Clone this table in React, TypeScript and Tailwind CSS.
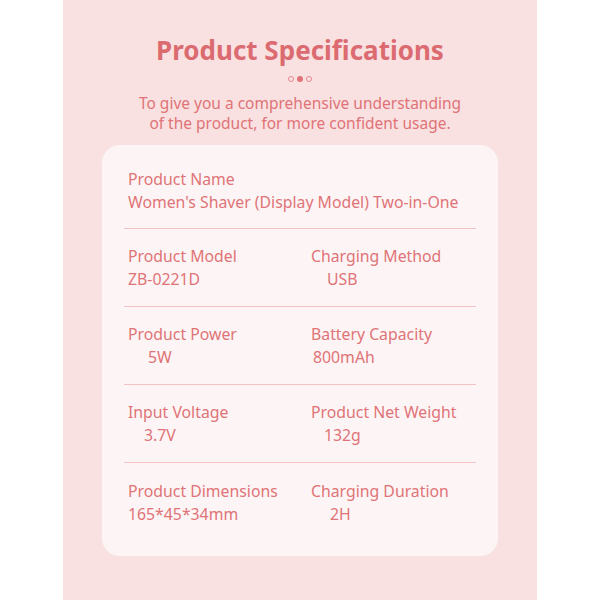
import React from "react";

const rows = [
	[
		{ label: "Product Model", value: "ZB-0221D", indent: "pl-0" },
		{ label: "Charging Method", value: "USB", indent: "pl-[16px]" },
	],
	[
		{ label: "Product Power", value: "5W", indent: "pl-[20px]" },
		{ label: "Battery Capacity", value: "800mAh", indent: "pl-[2px]" },
	],
	[
		{ label: "Input Voltage", value: "3.7V", indent: "pl-[16px]" },
		{ label: "Product Net Weight", value: "132g", indent: "pl-[13px]" },
	],
	[
		{ label: "Product Dimensions", value: "165*45*34mm", indent: "pl-0" },
		{ label: "Charging Duration", value: "2H", indent: "pl-[19px]" },
	],
];

const App = () => {
	return (
		<div className="w-full h-[600px] bg-white font-['Noto_Sans',sans-serif] text-[#e07377]">
			<div className="mx-auto w-[474px] h-[600px] bg-[#f9e1e1] pt-[31px]">
				<h1 className="text-center text-[26px] leading-[38px] font-bold text-[#db6b70]">
					Product Specifications
				</h1>

				<div className="flex justify-center items-center gap-[3px] mt-[7px]">
					<span className="w-[6px] h-[6px] rounded-full border border-[#e58a8d]" />
					<span className="w-[6px] h-[6px] rounded-full bg-[#e07377]" />
					<span className="w-[6px] h-[6px] rounded-full border border-[#e58a8d]" />
				</div>

				<p className="text-center text-[15.5px] leading-[20px] mt-[11px]">
					To give you a comprehensive understanding
					<br />
					of the product, for more confident usage.
				</p>

				<div className="mx-[39px] mt-[12px] bg-[#fdf5f5] rounded-[18px] px-[22px] pt-[23px] pb-[30px]">
					<div className="px-[4px] pb-[14px] border-b border-[#f3c3c3] text-[15.8px] leading-[23px]">
						<div>Product Name</div>
						<div>Women's Shaver (Display Model) Two-in-One</div>
					</div>

					{rows.map((row, i) => (
						<div
							key={i}
							className={
								i < rows.length - 1
									? "grid grid-cols-[183px_1fr] px-[4px] pt-[16px] pb-[15px] border-b border-[#f3c3c3] text-[15.8px] leading-[23px]"
									: "grid grid-cols-[183px_1fr] px-[4px] pt-[17px] text-[15.8px] leading-[23px]"
							}
						>
							{row.map((cell) => (
								<div key={cell.label}>
									<div>{cell.label}</div>
									<div className={cell.indent}>{cell.value}</div>
								</div>
							))}
						</div>
					))}
				</div>
			</div>
		</div>
	);
};

export default App;
